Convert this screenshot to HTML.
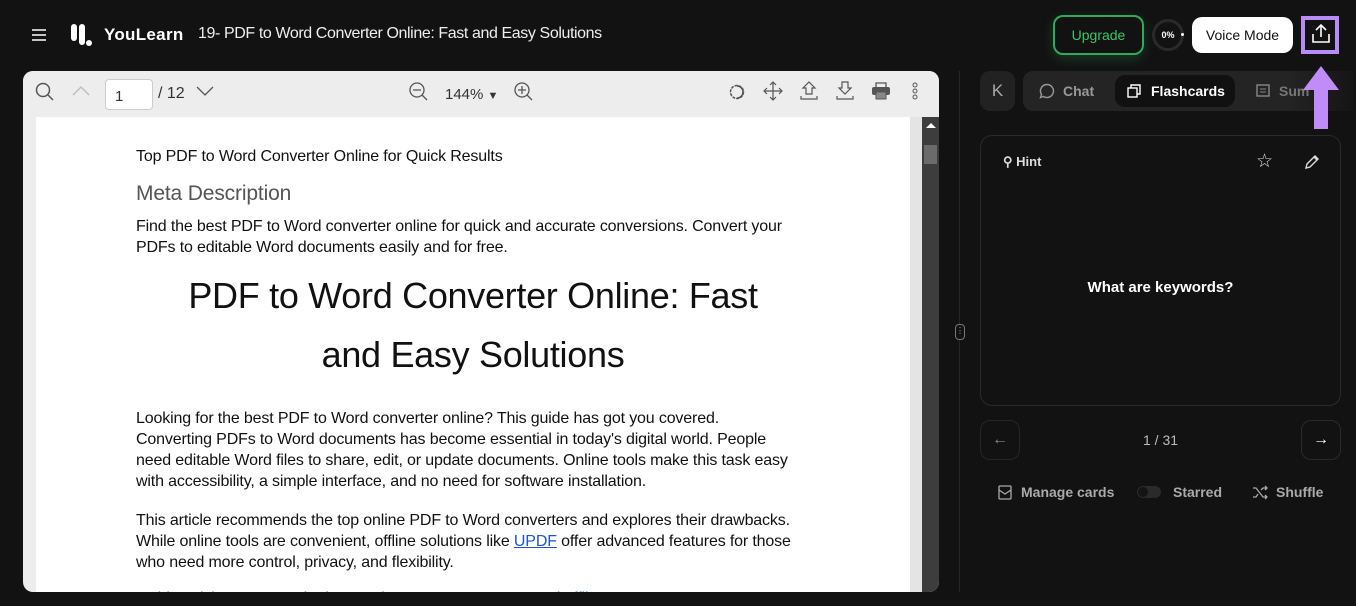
<!DOCTYPE html>
<html><head><meta charset="utf-8"><style>
*{box-sizing:border-box;margin:0;padding:0}
body{width:1356px;height:606px;background:#121212;font-family:"Liberation Sans",sans-serif;position:relative;overflow:hidden;color:#fff}
.a{position:absolute}
.pdf p{font-size:16px;line-height:21px;color:#111;letter-spacing:-0.15px}
svg{display:block}
</style></head><body>
<!-- header -->
<svg class="a" style="left:31px;top:28px" width="16" height="14"><path d="M1 2h14M1 7h14M1 12h14" stroke="#ddd" stroke-width="1.8"/></svg>
<svg class="a" style="left:70px;top:22px" width="30" height="26"><rect x="1" y="2" width="6" height="17" rx="3" fill="#fff"/><rect x="9" y="2" width="6" height="21" rx="3" fill="#fff"/><circle cx="19" cy="21" r="3" fill="#fff"/></svg>
<div class="a" style="left:104px;top:25px;font-size:17px;font-weight:bold;letter-spacing:.3px">YouLearn</div>
<div class="a" style="left:198px;top:25px;font-size:16px;color:#eee;letter-spacing:-0.4px">19- PDF to Word Converter Online: Fast and Easy Solutions</div>
<div class="a" style="left:1053px;top:15px;width:91px;height:40px;border:2px solid #2eaa5a;border-radius:10px;color:#3cc46a;font-size:14px;text-align:center;line-height:36px;box-shadow:0 4px 12px rgba(46,170,90,.25)">Upgrade</div>
<div class="a" style="left:1152px;top:19px;width:32px;height:32px;border:3px solid #2a2a2a;border-radius:50%;font-size:9px;font-weight:bold;text-align:center;line-height:26px">0%</div>
<div class="a" style="left:1181px;top:33px;width:3px;height:3px;background:#fff;border-radius:50%"></div>
<div class="a" style="left:1192px;top:17px;width:101px;height:36px;background:#fff;border-radius:10px;color:#111;font-size:14px;text-align:center;line-height:36px">Voice Mode</div>
<div class="a" style="left:1301px;top:16px;width:38px;height:38px;border:4px solid #b98cf5"></div>
<svg class="a" style="left:1310px;top:23px" width="22" height="22"><path d="M11 2v12M6 7l5-5 5 5M3 11v8h16v-8" stroke="#fff" stroke-width="1.6" fill="none"/></svg>
<!-- pdf viewer -->
<div class="a pdf" style="left:23px;top:71px;width:916px;height:521px;border-radius:10px;overflow:hidden;background:#ededed">
 <div class="a" style="left:0;top:0;width:916px;height:46px;background:#ededed;color:#333;font-size:16px">
  <svg class="a" style="left:12px;top:11px" width="20" height="20"><circle cx="8" cy="8" r="6.5" stroke="#555" stroke-width="1.5" fill="none"/><path d="M13 13l5 5" stroke="#555" stroke-width="1.5"/></svg>
  <svg class="a" style="left:48px;top:14px" width="20" height="12"><path d="M2 10l8-8 8 8" stroke="#bbb" stroke-width="1.3" fill="none"/></svg>
  <div class="a" style="left:82px;top:8px;width:48px;height:31px;background:#fff;border:1px solid #ccc;border-radius:4px;padding:8px 0 0 9px;font-size:15px">1</div>
  <div class="a" style="left:135px;top:14px">/ 12</div>
  <svg class="a" style="left:172px;top:14px" width="20" height="12"><path d="M2 2l8 8 8-8" stroke="#555" stroke-width="1.3" fill="none"/></svg>
  <svg class="a" style="left:385px;top:10px" width="22" height="22"><circle cx="9" cy="9" r="7" stroke="#555" stroke-width="1.3" fill="none"/><path d="M14 14l5 5M5 9h8" stroke="#555" stroke-width="1.3"/></svg>
  <div class="a" style="left:422px;top:15px;font-size:15px">144% <span style="font-size:11px">▼</span></div>
  <svg class="a" style="left:490px;top:10px" width="22" height="22"><circle cx="9" cy="9" r="7" stroke="#555" stroke-width="1.3" fill="none"/><path d="M14 14l5 5M5 9h8M9 5v8" stroke="#555" stroke-width="1.3"/></svg>
  <svg class="a" style="left:704px;top:11px" width="20" height="20"><circle cx="10" cy="10" r="6.5" stroke="#555" stroke-width="1.5" fill="none" stroke-dasharray="3 1"/><path d="M10 4a6 6 0 0 1 0 12" stroke="#555" fill="none" stroke-width="1.5"/></svg>
  <svg class="a" style="left:740px;top:10px" width="20" height="20"><path d="M10 1v18M1 10h18M7 4l3-3 3 3M7 16l3 3 3-3M4 7l-3 3 3 3M16 7l3 3-3 3" stroke="#555" stroke-width="1.2" fill="none"/></svg>
  <svg class="a" style="left:776px;top:10px" width="20" height="20"><path d="M7 13V7H4l6-6 6 6h-3v6zM2 15v3h16v-3" stroke="#555" stroke-width="1.2" fill="none"/></svg>
  <svg class="a" style="left:812px;top:10px" width="20" height="20"><path d="M7 1v6H4l6 6 6-6h-3V1zM2 15v3h16v-3" stroke="#555" stroke-width="1.2" fill="none"/></svg>
  <svg class="a" style="left:848px;top:10px" width="20" height="20"><path d="M5 6V2h10v4" stroke="#555" stroke-width="1.3" fill="none"/><rect x="1" y="6" width="18" height="8" rx="2" fill="#555"/><rect x="5" y="11" width="10" height="7" fill="#888" stroke="#555"/></svg>
  <svg class="a" style="left:888px;top:11px" width="8" height="20"><circle cx="4" cy="3" r="2" stroke="#555" fill="none"/><circle cx="4" cy="9" r="2" stroke="#555" fill="none"/><circle cx="4" cy="15" r="2" stroke="#555" fill="none"/></svg>
 </div>
 <div class="a" style="left:13px;top:46px;width:874px;height:475px;background:#fff;overflow:hidden">
  <p class="a" style="left:100px;top:29px">Top PDF to Word Converter Online for Quick Results</p>
  <p class="a" style="left:100px;top:64px;font-size:21px;color:#555;line-height:26px">Meta Description</p>
  <p class="a" style="left:100px;top:99px;width:670px">Find the best PDF to Word converter online for quick and accurate conversions. Convert your PDFs to editable Word documents easily and for free.</p>
  <p class="a" style="left:130px;top:149px;width:614px;font-size:36px;line-height:59px;text-align:center;letter-spacing:-0.3px">PDF to Word Converter Online: Fast and Easy Solutions</p>
  <p class="a" style="left:100px;top:291px;width:658px">Looking for the best PDF to Word converter online? This guide has got you covered. Converting PDFs to Word documents has become essential in today's digital world. People need editable Word files to share, edit, or update documents. Online tools make this task easy with accessibility, a simple interface, and no need for software installation.</p>
  <p class="a" style="left:100px;top:393px;width:668px">This article recommends the top online PDF to Word converters and explores their drawbacks. While online tools are convenient, offline solutions like <u style="color:#1a55d6">UPDF</u> offer advanced features for those who need more control, privacy, and flexibility.</p>
  <p class="a" style="left:100px;top:471px;color:#1a55d6">In this article, we cover the best tools to convert PDF to Word offline too!</p>
 </div>
 <div class="a" style="left:887px;top:46px;width:12px;height:475px;background:#e4e4e4"></div>
 <div class="a" style="left:899px;top:46px;width:17px;height:475px;background:#3d3d3d"></div>
 <div class="a" style="left:903px;top:52px;width:0;height:0;border:5px solid transparent;border-bottom:5px solid #fff;border-top:0"></div>
 <div class="a" style="left:901px;top:74px;width:13px;height:19px;background:#6b6b6b"></div>
</div>
<div class="a" style="left:959px;top:71px;width:1px;height:521px;background:#262626"></div>
<div class="a" style="left:955px;top:324px;width:10px;height:16px;border:1px solid #777;border-radius:4px;background:#121212;font-size:8px;color:#aaa;text-align:center;line-height:12px">⋮</div>
<!-- right panel -->
<div class="a" style="left:980px;top:71px;width:35px;height:40px;background:#222;border-radius:10px;color:#aaa;font-size:17px;text-align:center;line-height:40px">K</div>
<div class="a" style="left:1023px;top:71px;width:330px;height:40px;background:linear-gradient(90deg,#242424 80%,#151515);border-radius:10px 0 0 10px"></div>
<svg class="a" style="left:1039px;top:83px" width="16" height="16"><path d="M8 1.5a6.5 6.5 0 1 1-3.5 12l-3 1 1-3A6.5 6.5 0 0 1 8 1.5z" stroke="#999" stroke-width="1.4" fill="none"/></svg>
<div class="a" style="left:1063px;top:83px;font-size:14px;color:#999;font-weight:bold">Chat</div>
<div class="a" style="left:1115px;top:75px;width:120px;height:32px;background:#111;border-radius:10px"></div>
<svg class="a" style="left:1127px;top:84px" width="15" height="14"><rect x="1" y="4" width="9" height="9" stroke="#fff" stroke-width="1.4" fill="none"/><path d="M4 4V1h9v9h-3" stroke="#fff" stroke-width="1.4" fill="none"/></svg>
<div class="a" style="left:1151px;top:83px;font-size:14px;font-weight:bold">Flashcards</div>
<svg class="a" style="left:1256px;top:84px" width="14" height="13"><rect x="1" y="1" width="12" height="11" stroke="#888" stroke-width="1.4" fill="none"/><path d="M4 5h6M4 8h6" stroke="#888"/></svg>
<div class="a" style="left:1279px;top:83px;font-size:14px;color:#777;font-weight:bold">Sum</div>
<svg class="a" style="left:1299px;top:66px;z-index:5" width="44" height="64"><path d="M22 0L40 24H29V63H15V24H4Z" fill="#c08cf7"/></svg>
<div class="a" style="left:980px;top:135px;width:361px;height:271px;border:1px solid #2a2a2a;border-radius:12px"></div>
<div class="a" style="left:1003px;top:154px;font-size:13px;font-weight:bold;color:#ddd">⚲ Hint</div>
<div class="a" style="left:1256px;top:150px;font-size:19px;color:#ddd">☆</div>
<svg class="a" style="left:1304px;top:154px" width="16" height="16"><path d="M2 14l1-4 8-8 3 3-8 8zM10 3l3 3" stroke="#ddd" stroke-width="1.4" fill="none"/></svg>
<div class="a" style="left:980px;top:279px;width:361px;text-align:center;font-size:15px;font-weight:bold">What are keywords?</div>
<div class="a" style="left:980px;top:420px;width:40px;height:40px;border:1px solid #262626;border-radius:10px;color:#888;text-align:center;line-height:38px;font-size:16px">←</div>
<div class="a" style="left:1301px;top:420px;width:40px;height:40px;border:1px solid #2a2a2a;border-radius:10px;color:#fff;text-align:center;line-height:38px;font-size:16px">→</div>
<div class="a" style="left:980px;top:432px;width:361px;text-align:center;font-size:14px;color:#bbb">1 / 31</div>
<svg class="a" style="left:998px;top:485px" width="14" height="15"><rect x="1" y="1" width="12" height="13" rx="1" stroke="#aaa" stroke-width="1.3" fill="none"/><path d="M1 5l6 4 6-4" stroke="#aaa" stroke-width="1.3" fill="none"/></svg>
<div class="a" style="left:1021px;top:484px;font-size:14px;color:#aaa;font-weight:bold">Manage cards</div>
<div class="a" style="left:1137px;top:486px;width:24px;height:12px;background:#2a2a2a;border-radius:6px"></div>
<div class="a" style="left:1138px;top:487px;width:10px;height:10px;background:#141414;border-radius:50%"></div>
<div class="a" style="left:1173px;top:484px;font-size:14px;color:#aaa;font-weight:bold">Starred</div>
<svg class="a" style="left:1252px;top:485px" width="16" height="15"><path d="M1 3h3l7 9h4M1 12h3l2-3M9 5l2-2h4M13 1l2 2-2 2M13 10l2 2-2 2" stroke="#aaa" stroke-width="1.3" fill="none"/></svg>
<div class="a" style="left:1276px;top:484px;font-size:14px;color:#aaa;font-weight:bold">Shuffle</div>
</body></html>
